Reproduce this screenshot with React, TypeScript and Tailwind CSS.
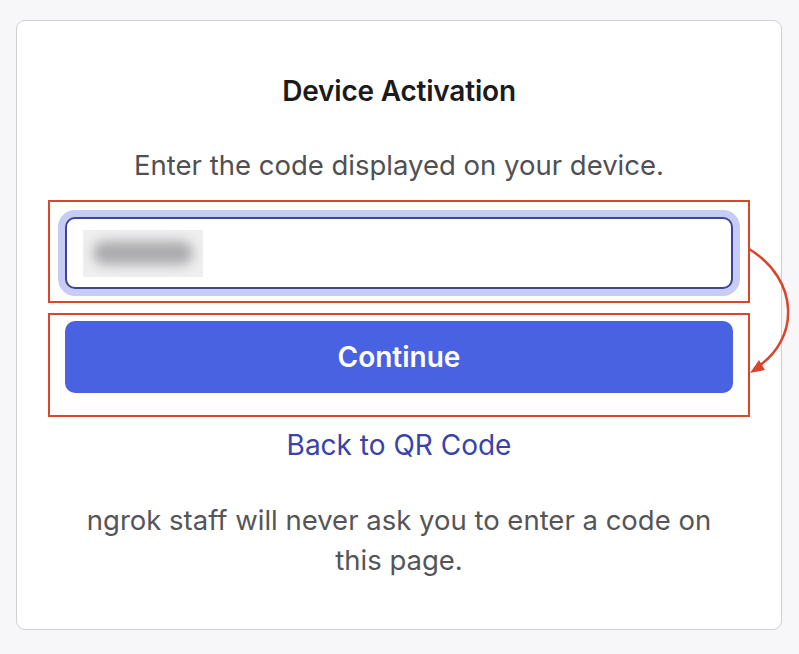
import React from "react";

export default function App() {
  return (
    <div className="relative min-h-screen bg-[#f7f7f9] px-4 pt-5 pb-6 font-['Inter',sans-serif]">
      <div className="flex h-[610px] w-[766px] flex-col items-center rounded-[9px] border-[1.5px] border-[#cfcfd4] bg-white">
        <h1 className="mt-[54px] text-[28px] font-semibold leading-[32px] tracking-[-0.2px] text-[#1b1b1d]">Device Activation</h1>
        <p className="mt-[40px] text-[27.5px] leading-[36px] text-[#505052]">Enter the code displayed on your device.</p>
        <div className="mt-[17px] flex h-[103px] w-[702px] justify-center border-2 border-[#d8472b] pt-[15px]">
          <div className="flex h-[72px] w-[668px] items-center rounded-[10px] border-2 border-[#3d4594] bg-white px-[16px] ring-[7px] ring-[#c7ccf5]">
            <div className="flex h-[47px] w-[120px] items-center justify-center bg-[#efeff0]">
              <div className="h-[24px] w-[100px] rounded-full bg-[#acacae] blur-[6px]" />
            </div>
          </div>
        </div>
        <div className="mt-[10px] flex h-[104px] w-[702px] justify-center border-2 border-[#d8472b] pt-[6px]">
          <button className="h-[72px] w-[668px] rounded-[10px] bg-[#4962e2] text-[28px] font-semibold text-white">Continue</button>
        </div>
        <a className="mt-[10px] text-[28px] leading-[36px] text-[#3a43a8]">Back to QR Code</a>
        <p className="mt-[37px] text-center text-[27.5px] leading-[40px] text-[#555558]">
          ngrok staff will never ask you to enter a code on
          <br />
          this page.
        </p>
      </div>
      <svg className="pointer-events-none absolute left-0 top-0" width="799" height="654" viewBox="0 0 799 654">
        <path d="M 749 249 C 800 280, 800 340, 756 368" fill="none" stroke="#d8452a" strokeWidth="2.5" />
        <polygon points="750,373 765,370 759,360" fill="#d8452a" />
      </svg>
    </div>
  );
}
